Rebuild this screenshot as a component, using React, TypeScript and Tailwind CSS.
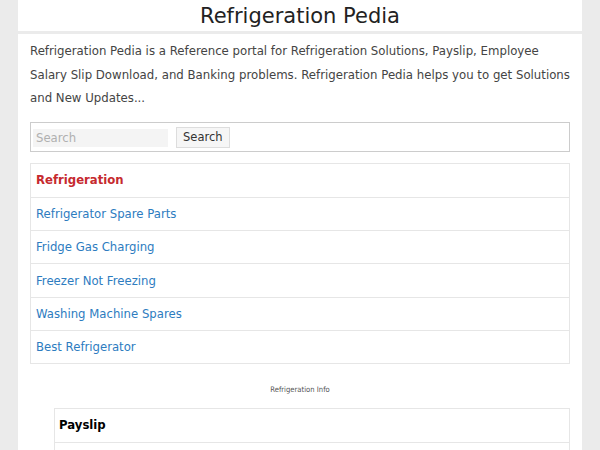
const LINKS = [
  "Refrigerator Spare Parts",
  "Fridge Gas Charging",
  "Freezer Not Freezing",
  "Washing Machine Spares",
  "Best Refrigerator",
];

export default function App() {
  return (
    <div className="min-h-[450px] bg-[#ebebeb] font-['DejaVu_Sans',sans-serif]">
      <div className="mx-[18px]">
        <div className="flex h-[31px] items-center justify-center bg-white pt-[1px]">
          <h1 className="text-[21px] leading-none text-[#222]">Refrigeration Pedia</h1>
        </div>
        <div className="mt-[3px] bg-white px-3 pb-6 pt-[6px]">
          <p className="text-[11.75px] leading-[23.5px] text-[#444]">
            Refrigeration Pedia is a Reference portal for Refrigeration Solutions, Payslip, Employee
            Salary Slip Download, and Banking problems. Refrigeration Pedia helps you to get Solutions
            and New Updates...
          </p>

          <div className="mt-[11px] flex h-[30px] items-center gap-2 border border-[#ccc] px-[2px] pt-[2px]">
            <input
              placeholder="Search"
              className="h-[18px] w-[135px] bg-[#f4f4f4] px-[3px] text-[11.7px] text-[#333] outline-none placeholder:text-[#b0b0b0]"
            />
            <button className="h-[21px] border border-[#ddd] bg-[#f6f6f6] px-[6px] pt-[1px] text-[11.5px] leading-none text-[#333]">
              Search
            </button>
          </div>

          <ul className="mt-[11px] border border-[#e6e6e6]">
            <li className="flex h-[33.3px] items-center px-[5px] pt-[2px] text-[11.7px] font-bold text-[#c62a2f]">
              Refrigeration
            </li>
            {LINKS.map((l) => (
              <li
                key={l}
                className="flex h-[33.3px] items-center border-t border-[#e6e6e6] px-[5px] pt-[2px] text-[11.7px] text-[#2d7cbf]"
              >
                {l}
              </li>
            ))}
          </ul>

          <div className="mt-[20px] text-center font-['Liberation_Sans_Narrow','DejaVu_Sans_Condensed',sans-serif] text-[7.6px] text-[#555]">
            Refrigeration Info
          </div>

          <div className="ml-[24px] mt-[12px] border border-[#e6e6e6]">
            <div className="flex h-[33px] items-center px-[4px] pt-[2px] text-[11.7px] font-bold text-black">
              Payslip
            </div>
            <div className="h-[33px] border-t border-[#e6e6e6]"></div>
          </div>
        </div>
      </div>
    </div>
  );
}
